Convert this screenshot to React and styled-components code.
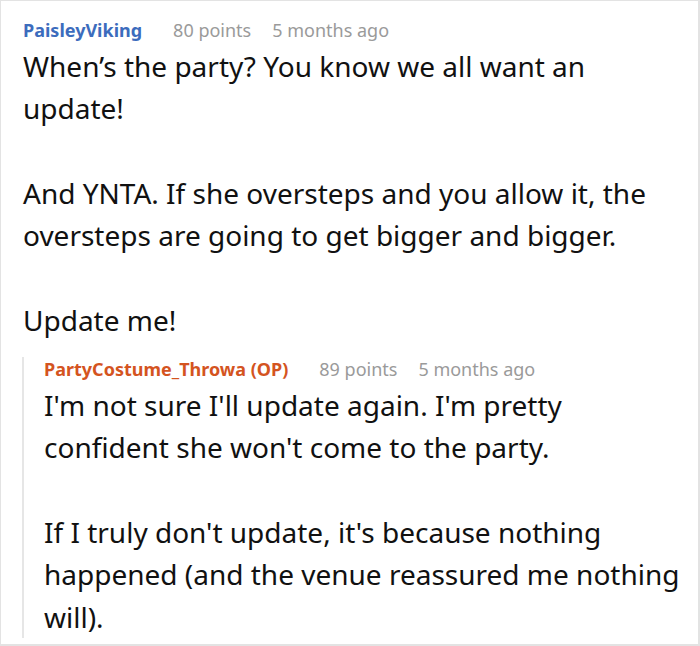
import React from "react";
import styled, { createGlobalStyle } from "styled-components";

const GlobalStyle = createGlobalStyle`
    html, body {
        margin: 0;
        padding: 0;
        background: #ffffff;
    }
    body {
        font-family: "Noto Sans", "Open Sans", sans-serif;
        color: #1a1a1a;
    }
`;

const Frame = styled.div`
    box-sizing: border-box;
    width: 700px;
    height: 646px;
    border: 1px solid #e3e3e3;
    border-right-width: 2px;
    border-bottom-width: 2px;
    overflow: hidden;
    background: #fff;
`;

const Comment = styled.div`
    padding: ${(p) => (p.$reply ? "0" : "17px 16px 0 22px")};
    margin-top: ${(p) => (p.$reply ? "16px" : "0")};
`;

const Meta = styled.div`
    display: flex;
    align-items: baseline;
    font-size: 18px;
    line-height: 24px;
    white-space: nowrap;
`;

const Author = styled.span`
    font-weight: 700;
    color: ${(p) => (p.$op ? "#d4541f" : "#3c6cbd")};
    margin-right: 31px;
`;

const Stat = styled.span`
    color: #9a9a9a;
    margin-right: 21px;
`;

const Body = styled.div`
    margin-top: 3px;
    font-size: 28px;
    line-height: 42.3px;
    color: #111;
`;

const Para = styled.p`
    margin: 0 0 42.3px;

    &:last-child {
        margin-bottom: 0;
    }
`;

const Thread = styled.div`
    border-left: 2px solid #e6e6e6;
    padding-left: 20px;
    margin-left: -1px;
`;

const App = () => {
    return (
        <>
            <GlobalStyle />
            <Frame>
                <Comment>
                    <Meta>
                        <Author>PaisleyViking</Author>
                        <Stat>80 points</Stat>
                        <Stat>5 months ago</Stat>
                    </Meta>
                    <Body>
                        <Para>When’s the party? You know we all want an update!</Para>
                        <Para>
                            And YNTA. If she oversteps and you allow it, the oversteps are
                            going to get bigger and bigger.
                        </Para>
                        <Para>Update me!</Para>
                    </Body>
                    <Comment $reply>
                        <Thread>
                            <Meta>
                                <Author $op>PartyCostume_Throwa (OP)</Author>
                                <Stat>89 points</Stat>
                                <Stat>5 months ago</Stat>
                            </Meta>
                            <Body>
                                <Para>
                                    I'm not sure I'll update again. I'm pretty confident she
                                    won't come to the party.
                                </Para>
                                <Para>
                                    If I truly don't update, it's because nothing happened
                                    (and the venue reassured me nothing will).
                                </Para>
                            </Body>
                        </Thread>
                    </Comment>
                </Comment>
            </Frame>
        </>
    );
};

export default App;
